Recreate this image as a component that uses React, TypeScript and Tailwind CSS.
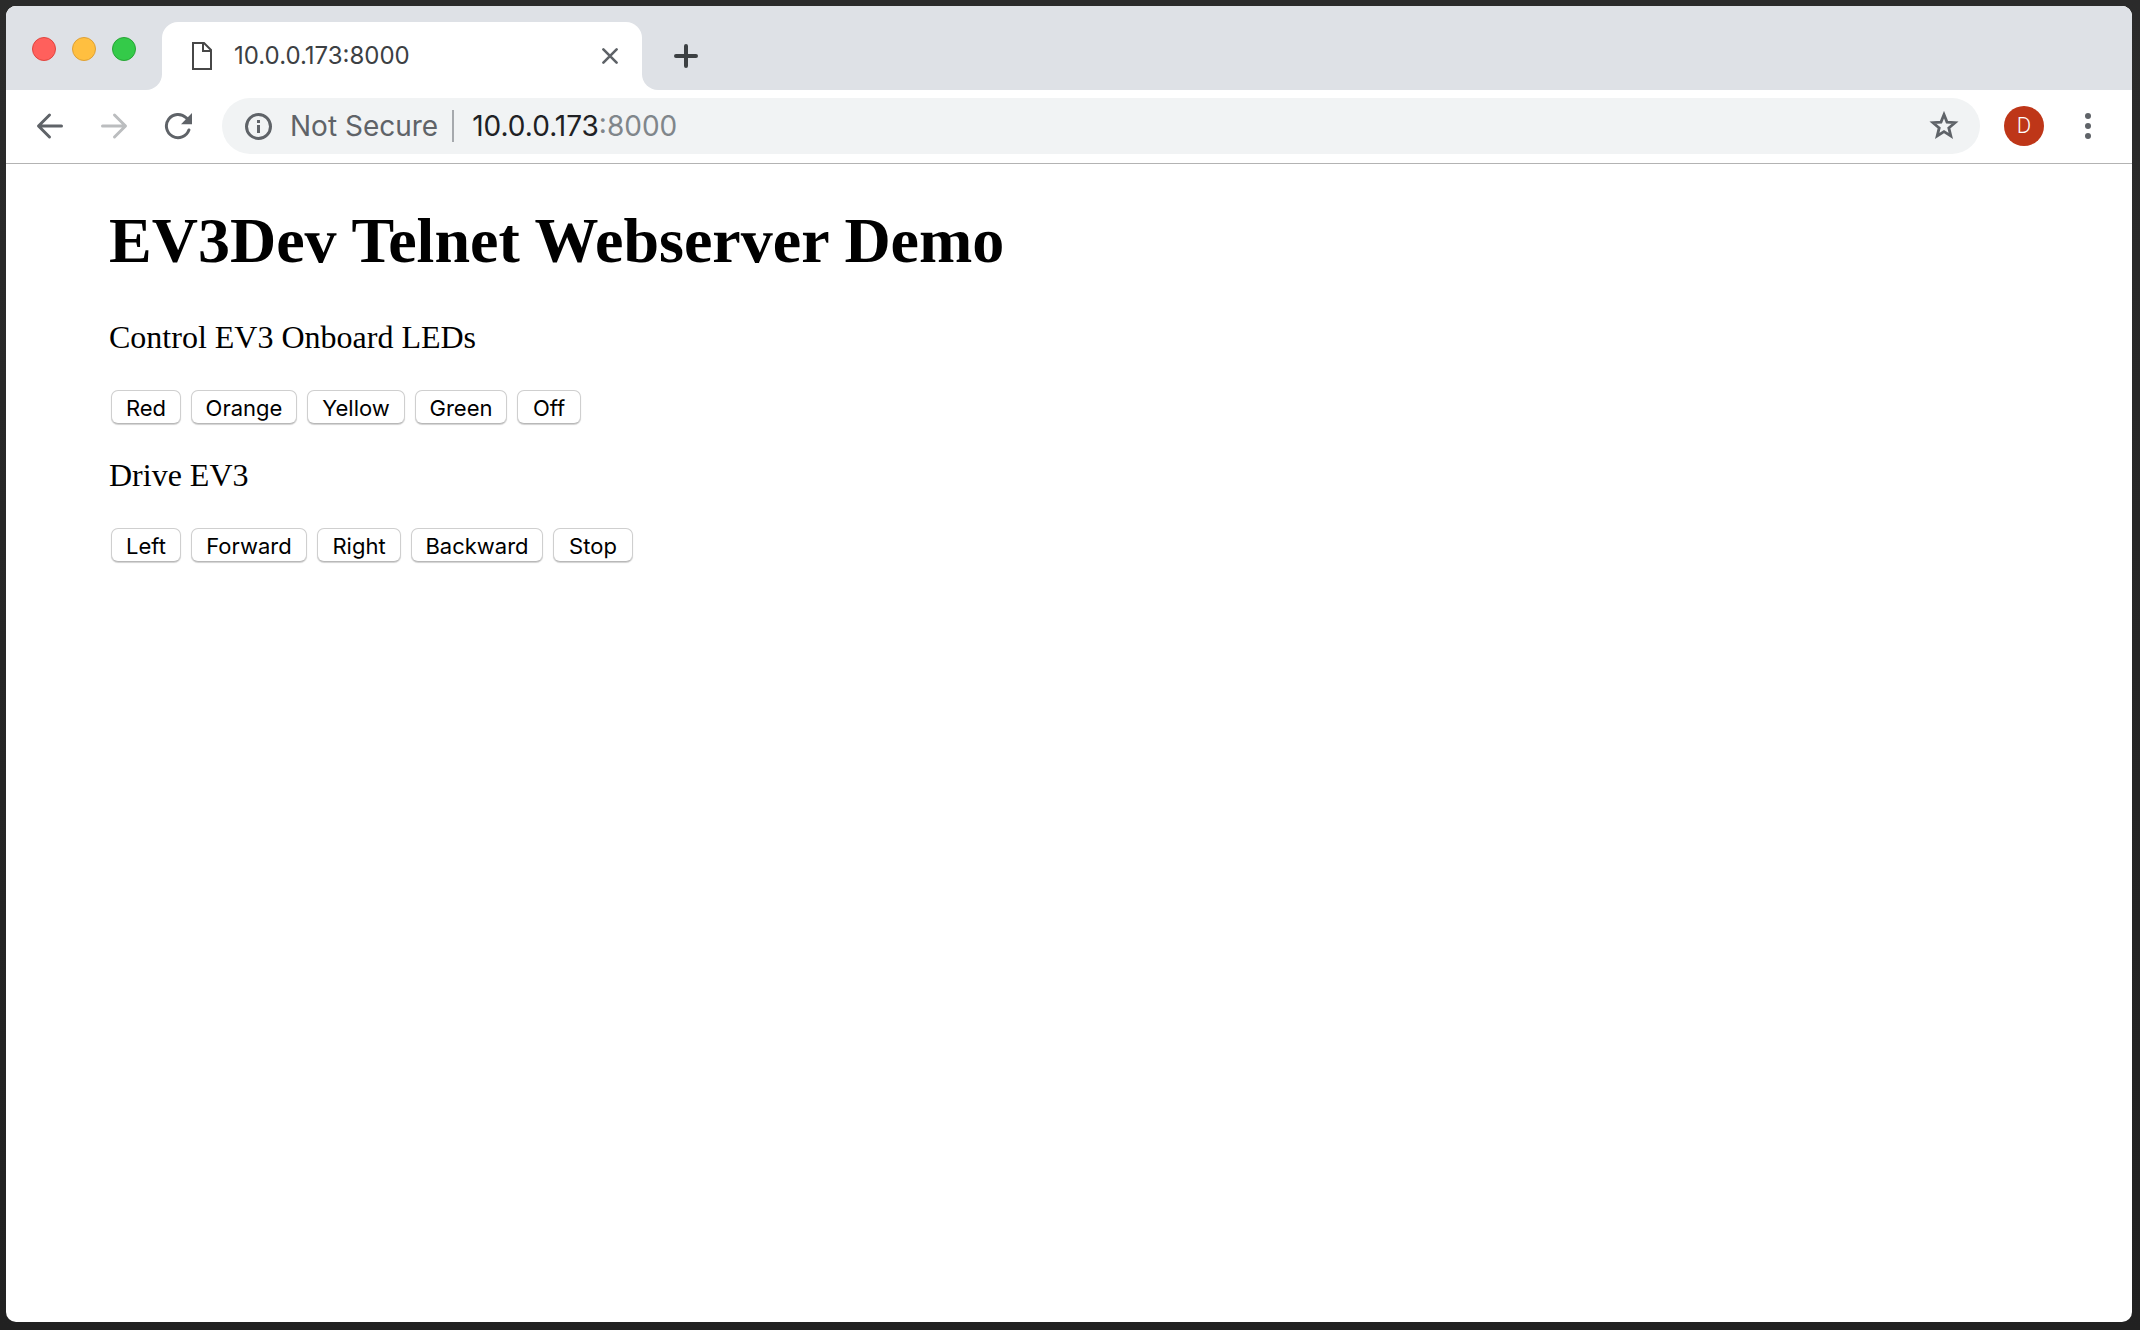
import React from "react";

const ledActions = [
  { label: "Red", width: "w-[70px]" },
  { label: "Orange", width: "w-[106px]" },
  { label: "Yellow", width: "w-[98px]" },
  { label: "Green", width: "w-[92px]" },
  { label: "Off", width: "w-[64px]" },
];

const driveActions = [
  { label: "Left", width: "w-[70px]" },
  { label: "Forward", width: "w-[116px]" },
  { label: "Right", width: "w-[84px]" },
  { label: "Backward", width: "w-[132px]" },
  { label: "Stop", width: "w-[80px]" },
];

function ActionRow({ actions }: { actions: { label: string; width: string }[] }) {
  return (
    <div className="flex flex-wrap gap-[10px] pl-[2px] font-['Inter',sans-serif] text-[22px]">
      {actions.map(({ label, width }) => (
        <button
          key={label}
          type="button"
          className={`h-[34px] rounded-[7px] border border-[#cfcfcf] border-b-[#b8b8b8] bg-white pt-px text-center leading-[32px] whitespace-nowrap shadow-[0_1px_1px_rgba(0,0,0,0.18)] ${width}`}
        >
          {label}
        </button>
      ))}
    </div>
  );
}

function TabStrip() {
  return (
    <div className="flex h-[84px] bg-white">
      <div className="flex w-[156px] gap-4 rounded-br-[16px] bg-[#dee1e6] pt-[31px] pl-[26px]">
        <button type="button" aria-label="Close window" className="size-6 rounded-full border border-[#e0443e] bg-[#ff605c]" />
        <button type="button" aria-label="Minimize window" className="size-6 rounded-full border border-[#dea035] bg-[#ffbf40]" />
        <button type="button" aria-label="Zoom window" className="size-6 rounded-full border border-[#27a535] bg-[#34ca49]" />
      </div>
      <div className="w-[480px] bg-[#dee1e6] pt-4">
        <div className="flex h-[68px] items-center rounded-t-[16px] bg-white pr-6 pl-[30px]">
          <svg width="20" height="28" viewBox="0 0 20 28" fill="none" stroke="#474747" strokeWidth="2">
            <path d="M1 1H12L19 8V27H1Z" />
            <path d="M11 1V9H19" />
          </svg>
          <span className="ml-[22px] flex-1 font-['Inter',sans-serif] text-[24px] leading-[32px] text-[#3c4043]">
            10.0.0.173:8000
          </span>
          <button type="button" aria-label="Close tab">
            <svg width="16" height="16" viewBox="0 0 16 16" stroke="#5f6368" strokeWidth="2.6" strokeLinecap="round">
              <path d="M1.4 1.4L14.6 14.6M14.6 1.4L1.4 14.6" />
            </svg>
          </button>
        </div>
      </div>
      <div className="flex flex-1 items-start rounded-bl-[16px] bg-[#dee1e6] pt-[38px] pl-8">
        <button type="button" aria-label="New tab">
          <svg width="24" height="24" viewBox="0 0 24 24" stroke="#3c4043" strokeWidth="4" strokeLinecap="round">
            <path d="M12 2V22M2 12H22" />
          </svg>
        </button>
      </div>
    </div>
  );
}

function Toolbar() {
  return (
    <div className="flex h-[74px] items-center border-b border-[#b3b3b3] bg-white pr-[41px] pb-px pl-[30px]">
      <div className="flex gap-9">
        <button type="button" aria-label="Back">
          <svg width="28" height="28" viewBox="0 0 28 28" fill="none" stroke="#5f6368" strokeWidth="3" strokeLinecap="round" strokeLinejoin="round">
            <path d="M25.5 14H3M13.5 3L2.5 14L13.5 25" />
          </svg>
        </button>
        <button type="button" aria-label="Forward" disabled>
          <svg width="28" height="28" viewBox="0 0 28 28" fill="none" stroke="#bbbdbf" strokeWidth="3" strokeLinecap="round" strokeLinejoin="round">
            <path d="M2.5 14H25M14.5 3L25.5 14L14.5 25" />
          </svg>
        </button>
        <button type="button" aria-label="Reload">
          <svg width="28" height="28" viewBox="0 0 28 28" fill="none">
            <path d="M24.9 18A11.6 11.6 0 1 1 22.2 5.8L24 7.6" stroke="#5f6368" strokeWidth="3" strokeLinecap="round" />
            <path d="M28 1V12.3H17Z" fill="#5f6368" />
          </svg>
        </button>
      </div>
      <div className="ml-[30px] flex h-14 flex-1 items-center rounded-full bg-[#f1f3f4] pr-[21px] pl-[22px] font-['Inter',sans-serif] text-[28px] leading-[36px]">
        <button type="button" className="flex items-center text-[#5f6368]">
          <svg width="28" height="28" viewBox="0 0 28 28" fill="none">
            <circle cx="14.500" cy="14.500" r="12" stroke="#5f6368" strokeWidth="3" />
            <path d="M13 8H16V11H13ZM13 13H16V21H13Z" fill="#5f6368" />
          </svg>
          <span className="ml-[18px]">Not Secure</span>
        </button>
        <span className="ml-[14px] h-8 w-[2px] bg-[#a6a9ad]" />
        <div
          role="textbox"
          aria-label="Address"
          contentEditable
          suppressContentEditableWarning
          spellCheck={false}
          className="ml-[18px] flex-1 text-[#202124] outline-none"
        >
          10.0.0.173<span className="text-[#80868b]">:8000</span>
        </div>
        <button type="button" aria-label="Bookmark this page">
          <svg width="30" height="30" viewBox="0 0 30 30" fill="none" stroke="#5f6368" strokeWidth="2.8">
            <path d="M15 3.6L18 11.1L26 11.7L19.8 16.9L21.8 24.900L15 20.600L8.200 24.900L10.200 16.900L4 11.700L12 11.100Z" />
          </svg>
        </button>
      </div>
      <button
        type="button"
        aria-label="Profile"
        className="ml-6 size-10 rounded-full bg-[#be3618] text-center font-['Roboto',sans-serif] text-[22px] leading-[40px] font-light text-white"
      >
        D
      </button>
      <button type="button" aria-label="Menu" className="ml-[41px]">
        <svg width="6" height="26" viewBox="0 0 6 26" fill="#5f6368">
          <circle cx="3" cy="3" r="3" />
          <circle cx="3" cy="13" r="3" />
          <circle cx="3" cy="23" r="3" />
        </svg>
      </button>
    </div>
  );
}

export default function App() {
  return (
    <div className="flex min-h-screen flex-col bg-linear-to-b from-[#2b2b2b] to-[#212121] pt-[6px] pr-2 pb-2 pl-[6px]">
      <div className="flex flex-1 flex-col overflow-hidden rounded-[10px] bg-white">
        <TabStrip />
        <Toolbar />
        <main className="px-[103px] pt-[41px] font-['Liberation_Serif',serif] text-[32px] leading-[36px] text-black">
          <h1 className="text-[64px] leading-[72px] font-bold">EV3Dev Telnet Webserver Demo</h1>
          <p className="mt-[42px] mb-[35px]">Control EV3 Onboard LEDs</p>
          <ActionRow actions={ledActions} />
          <p className="mt-[33px] mb-[35px]">Drive EV3</p>
          <ActionRow actions={driveActions} />
        </main>
      </div>
    </div>
  );
}
